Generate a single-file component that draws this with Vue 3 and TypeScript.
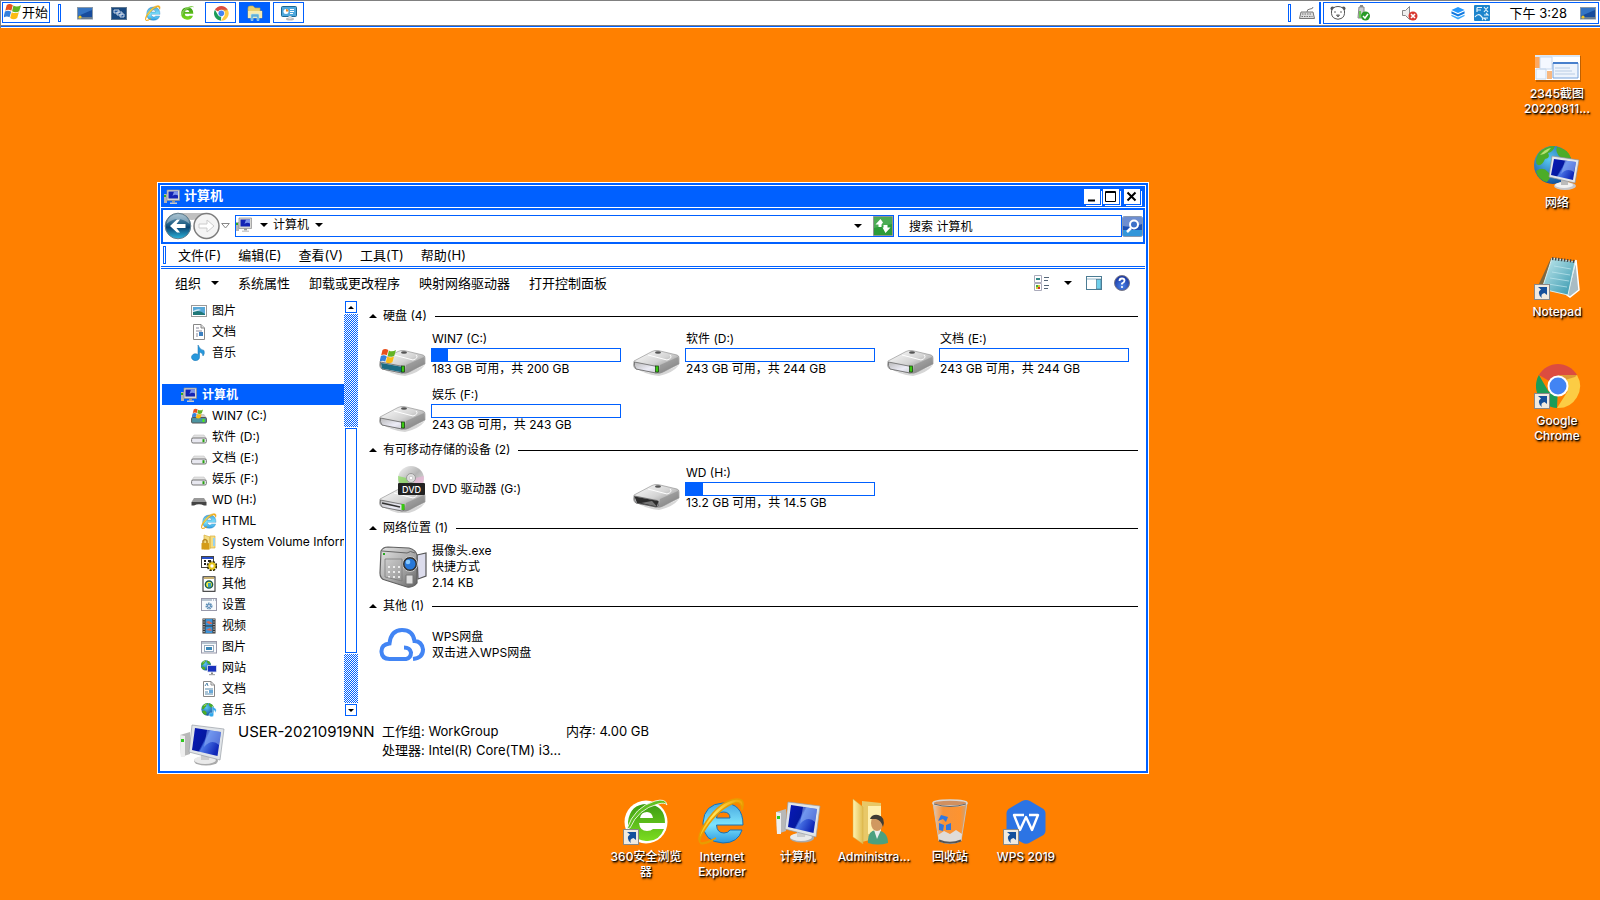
<script setup lang="ts">
import { ref } from 'vue'

interface TreeNode { icon: string; label: string; level: number; selected?: boolean }
interface Volume { icon: string; name: string; used?: number; lines: string[] }
interface Group { title: string; items: Volume[] }
interface Shortcut { icon: string; label: string; linked?: boolean }

const launchers = [
  { icon: 'showdesk', label: '显示桌面' },
  { icon: 'switcher', label: '切换窗口' },
  { icon: 'ie', label: 'Internet Explorer' },
  { icon: 'e360', label: '360安全浏览器' },
]
const tasks = [
  { icon: 'chrome', label: 'Google Chrome', active: false },
  { icon: 'explorer', label: '计算机', active: true },
  { icon: 'panel', label: '控制面板', active: false },
]
const menus = ['文件(F)', '编辑(E)', '查看(V)', '工具(T)', '帮助(H)']
const commands = ['系统属性', '卸载或更改程序', '映射网络驱动器', '打开控制面板']

const tree: TreeNode[] = [
  { icon: 'picture', label: '图片', level: 1 },
  { icon: 'doc', label: '文档', level: 1 },
  { icon: 'music', label: '音乐', level: 1 },
  { icon: '', label: '', level: 1 },
  { icon: 'pc', label: '计算机', level: 0, selected: true },
  { icon: 'sysdrive', label: 'WIN7 (C:)', level: 1 },
  { icon: 'smalldrive', label: '软件 (D:)', level: 1 },
  { icon: 'smalldrive', label: '文档 (E:)', level: 1 },
  { icon: 'smalldrive', label: '娱乐 (F:)', level: 1 },
  { icon: 'smallusb', label: 'WD (H:)', level: 1 },
  { icon: 'ie', label: 'HTML', level: 2 },
  { icon: 'locked', label: 'System Volume Information', level: 2 },
  { icon: 'program', label: '程序', level: 2 },
  { icon: 'other', label: '其他', level: 2 },
  { icon: 'settings', label: '设置', level: 2 },
  { icon: 'film', label: '视频', level: 2 },
  { icon: 'picwin', label: '图片', level: 2 },
  { icon: 'smallnet', label: '网站', level: 2 },
  { icon: 'docs', label: '文档', level: 2 },
  { icon: 'globemusic', label: '音乐', level: 2 },
]

const groups: Group[] = [
  {
    title: '硬盘 (4)',
    items: [
      { icon: 'drivewin', name: 'WIN7 (C:)', used: 8.5, lines: ['183 GB 可用，共 200 GB'] },
      { icon: 'drive', name: '软件 (D:)', used: 0, lines: ['243 GB 可用，共 244 GB'] },
      { icon: 'drive', name: '文档 (E:)', used: 0, lines: ['243 GB 可用，共 244 GB'] },
      { icon: 'drive', name: '娱乐 (F:)', used: 0, lines: ['243 GB 可用，共 243 GB'] },
    ],
  },
  {
    title: '有可移动存储的设备 (2)',
    items: [
      { icon: 'dvd', name: 'DVD 驱动器 (G:)', lines: [] },
      { icon: 'driveusb', name: 'WD (H:)', used: 9, lines: ['13.2 GB 可用，共 14.5 GB'] },
    ],
  },
  { title: '网络位置 (1)', items: [{ icon: 'camera', name: '摄像头.exe', lines: ['快捷方式', '2.14 KB'] }] },
  { title: '其他 (1)', items: [{ icon: 'cloud', name: 'WPS网盘', lines: ['双击进入WPS网盘'] }] },
]

const rightIcons: Shortcut[] = [
  { icon: 'shot', label: '2345截图 20220811...' },
  { icon: 'network', label: '网络' },
  { icon: 'notepad', label: 'Notepad', linked: true },
  { icon: 'chrome', label: 'Google Chrome', linked: true },
]
const bottomIcons: Shortcut[] = [
  { icon: 'e360', label: '360安全浏览器', linked: true },
  { icon: 'ie', label: 'Internet Explorer' },
  { icon: 'computer', label: '计算机' },
  { icon: 'userfolder', label: 'Administra...' },
  { icon: 'bin', label: '回收站' },
  { icon: 'wps', label: 'WPS 2019', linked: true },
]
const search = ref('搜索 计算机')
</script>

<template>
  <svg class="sheet" aria-hidden="true">
    <defs>
      <linearGradient id="g-screen" x1="0" y1="0" x2="1" y2="0.5"><stop offset="0" stop-color="#0818b8" /><stop offset=".5" stop-color="#0418a0" /><stop offset=".56" stop-color="#4c78e8" /><stop offset="1" stop-color="#1028b8" /></linearGradient>
      <linearGradient id="g-metal" x1="0" y1="0" x2="1" y2="1"><stop offset="0" stop-color="#fff" /><stop offset=".5" stop-color="#d4d4d4" /><stop offset="1" stop-color="#6c6c6c" /></linearGradient>
      <linearGradient id="g-face" x1="0" y1="0" x2="1" y2="1"><stop offset="0" stop-color="#b8b8b8" /><stop offset=".6" stop-color="#ececf6" /><stop offset="1" stop-color="#c8c8d0" /></linearGradient>
      <linearGradient id="g-ie" x1="0" y1="0" x2="0" y2="1"><stop offset="0" stop-color="#48a8e0" /><stop offset=".55" stop-color="#7ee4fc" /><stop offset="1" stop-color="#2c98e0" /></linearGradient>
      <linearGradient id="g-green" x1="0" y1="0" x2="0" y2="1"><stop offset="0" stop-color="#3c9c14" /><stop offset="1" stop-color="#7cdc20" /></linearGradient>
      <linearGradient id="g-gold" x1="0" y1="1" x2="1" y2="0"><stop offset="0" stop-color="#ffb400" /><stop offset=".5" stop-color="#ffe45c" /><stop offset="1" stop-color="#f0a000" /></linearGradient>
      <linearGradient id="g-pad" x1="0" y1="0" x2="1" y2="1"><stop offset="0" stop-color="#c8ecf0" /><stop offset="1" stop-color="#2f94ac" /></linearGradient>
      <linearGradient id="g-folder" x1="0" y1="0" x2="1" y2="0"><stop offset="0" stop-color="#fff4b0" /><stop offset="1" stop-color="#e0bc50" /></linearGradient>
      <linearGradient id="g-disc" x1="0" y1="0" x2="1" y2="1"><stop offset="0" stop-color="#f8f8f8" /><stop offset=".5" stop-color="#b4b4b4" /><stop offset="1" stop-color="#eee" /></linearGradient>
      <linearGradient id="g-glass" x1="0" y1="0" x2="1" y2="0"><stop offset="0" stop-color="#e0d4cc" stop-opacity=".9" /><stop offset=".3" stop-color="#f0a060" stop-opacity=".6" /><stop offset=".8" stop-color="#fca050" stop-opacity=".6" /><stop offset="1" stop-color="#b8a898" stop-opacity=".9" /></linearGradient>
      <linearGradient id="g-back" x1="0" y1="0" x2="0" y2="1"><stop offset="0" stop-color="#7fa4b8" /><stop offset=".45" stop-color="#1c5c84" /><stop offset=".55" stop-color="#0c4470" /><stop offset="1" stop-color="#2cb4dc" /></linearGradient>
      <linearGradient id="g-cam" x1="0" y1="0" x2="1" y2="1"><stop offset="0" stop-color="#e4e4e4" /><stop offset=".6" stop-color="#a4a4a4" /><stop offset="1" stop-color="#606060" /></linearGradient>
      <radialGradient id="g-globe" cx=".4" cy=".35" r=".7"><stop offset="0" stop-color="#58c8f4" /><stop offset="1" stop-color="#104c98" /></radialGradient>
      <radialGradient id="g-help" cx=".5" cy=".7" r=".7"><stop offset="0" stop-color="#4c84e8" /><stop offset="1" stop-color="#14309c" /></radialGradient>
    </defs>

    <symbol id="i-flag" viewBox="0 0 16 16">
      <path d="M2.500 2Q5 0 8.300 2L6.900 7.300Q4 5.500 1.200 7.300z" fill="#e8501c" />
      <path d="M8.900 2.400Q12 4.500 16 2L14.300 7.800Q11 9.600 7.600 7.700z" fill="#64b424" />
      <path d="M.9 8.100Q3.600 6.500 6.700 8.200L5.200 13.400Q2.600 11.800 -.5 13.600z" fill="#3480dc" />
      <path d="M7.300 8.600Q10.400 10.400 14 8.600L12.400 14.200Q9 16.400 5.800 14.200z" fill="#fcbc14" />
    </symbol>
    <symbol id="i-computer" viewBox="0 0 48 48">
      <path d="M2 15L12 12V34L3 37z" fill="#b8b8b8" /><path d="M2 15L7 16V37L3 37z" fill="#eee" /><rect x="3" y="19" width="3" height="3" fill="#30c820" />
      <ellipse cx="28" cy="41" rx="12" ry="4.500" fill="#aaa" /><ellipse cx="27" cy="40" rx="11" ry="4" fill="#eaeaea" /><path d="M23 33H32L31 40H23z" fill="#ccc" />
      <path d="M14 5L46 9L42 40L11 32z" fill="#e0e4e8" stroke="#9a9fa6" stroke-width=".7" /><path d="M17 8L43 12L39.500 36L14 30z" fill="url(#g-screen)" />
      <path d="M29 10L43 12L41 25Q34 18 26 27z" fill="#90b0f4" opacity=".55" />
    </symbol>
    <symbol id="i-pc" viewBox="0 0 16 16">
      <path d="M0 5H3V14H0z" fill="#b4b4b4" /><rect x="0" y="6" width="2" height="2" fill="#30b020" />
      <path d="M3 1H15.500V11.500H3z" fill="#d8d8d4" stroke="#8c8c8c" stroke-width=".7" /><path d="M4.500 2.500H14V9.500H4.500z" fill="#1424b4" /><path d="M10 2.500H14V6.500Q11 5 8.500 7z" fill="#7c94ec" />
      <path d="M8 11.500H11V13.500H8z" fill="#999" /><path d="M6 13.500H13V15H6z" fill="#ccc" />
    </symbol>
    <symbol id="i-globe" viewBox="0 0 48 48">
      <circle cx="20" cy="22" r="19" fill="url(#g-globe)" />
      <path d="M5 11Q11 3 22 3Q20 9 15 10Q18 15 12 16Q9 23 5 22Q1 20 5 11zM24 4Q35 6 38 15Q31 18 27 14Q22 9 24 4zM3 28Q10 23 15 29Q20 33 14 39Q5 37 3 28z" fill="#4cac28" />
      <path d="M7 12Q12 6 18 5Q15 9 11 11z" fill="#b4e070" />
    </symbol>
    <symbol id="i-network" viewBox="0 0 48 48">
      <use href="#i-globe" width="48" height="48" />
      <ellipse cx="32" cy="43" rx="11" ry="4" fill="#c8c8cc" /><ellipse cx="31" cy="42" rx="9" ry="3" fill="#f2f2f2" /><path d="M28 34H35V42H28z" fill="#bbb" />
      <path d="M19 13L46 17L42 40L16 34z" fill="#e4e7ea" stroke="#8c9298" stroke-width=".7" /><path d="M21 16L43 19L40 37L18 32z" fill="url(#g-screen)" /><path d="M32 17.500L43 19L41 29Q34 24 28 31z" fill="#90b0f4" opacity=".6" />
    </symbol>
    <symbol id="i-smallnet" viewBox="0 0 16 16">
      <use href="#i-globe" x="-.5" y="-.5" width="13" height="13" />
      <path d="M6.500 5.500H15.500V12H6.500z" fill="#1830bc" stroke="#e0e4f0" stroke-width=".8" /><path d="M10 12.500H12V14H10z" fill="#888" /><path d="M8 14H14V15.200H8z" fill="#aaa" />
    </symbol>
    <symbol id="i-globemusic" viewBox="0 0 48 48">
      <use href="#i-globe" width="48" height="48" /><path d="M34 12Q40 18 45 21Q47 28 42 32Q43 26 38 24V39A7 6 0 1 1 34 33z" fill="#30a8ec" stroke="#fff" />
    </symbol>
    <symbol id="i-base" viewBox="0 0 48 48">
      <path d="M2 36Q20 48 46 34Q40 42 26 45Q12 44 2 36z" fill="#bbb" opacity=".6" />
      <path d="M1 30L19 20.500Q22 19 25 19.500L44 24Q46 24.500 46 27V33L30 41Q27 43 23 42L3 38Q.5 37 .5 34z" fill="url(#g-metal)" stroke="#888" stroke-width=".6" />
      <path d="M27 34L45 26V33L30 41L26 42z" fill="#888" opacity=".6" />
      <path d="M15 24L34 29Q40 27 37 24" fill="none" stroke="#fff" /><ellipse cx="25" cy="21.500" rx="3" ry="1.200" fill="#555" />
      <path d="M1.500 31L24 35.500Q26 36 25.500 41L23 42L3 38Q.7 35 1.500 31z" fill="url(#g-face)" stroke="#666" stroke-width=".8" />
    </symbol>
    <symbol id="i-drive" viewBox="0 0 48 48"><use href="#i-base" width="48" height="48" /><rect x="22.500" y="35" width="3" height="6" fill="#38c810" stroke="#183810" stroke-width=".7" /></symbol>
    <symbol id="i-drivewin" viewBox="0 0 48 48">
      <use href="#i-base" width="48" height="48" /><path d="M2 32L24 36L24 41.500L3 37.500z" fill="#1c6c84" /><rect x="22.500" y="35" width="3" height="6" fill="#38c810" stroke="#183810" stroke-width=".7" />
      <use href="#i-flag" x="1" y="17" width="16" height="16" />
    </symbol>
    <symbol id="i-driveusb" viewBox="0 0 48 48"><use href="#i-base" width="48" height="48" /><path d="M1.500 31.500L25.500 36L24 42L4 38z" fill="#2c2c2c" /><path d="M8 38L19 36L24 41.500z" fill="#777" /></symbol>
    <symbol id="i-dvd" viewBox="0 0 48 48">
      <g transform="translate(0 4)"><use href="#i-base" width="48" height="48" /><path d="M3 34L21 38" stroke="#333" stroke-width="1.500" /><rect x="22.500" y="35" width="3" height="6" fill="#38c810" /></g>
      <circle cx="32" cy="14" r="13" fill="url(#g-disc)" /><path d="M32 14L19 11Q19 19 24 23z" fill="#7ce048" opacity=".6" /><path d="M32 14L45 11Q45 19 41 23z" fill="#f0b0d8" opacity=".6" /><circle cx="32" cy="13" r="4.500" fill="#ddd" stroke="#999" /><circle cx="32" cy="13" r="1.800" fill="#fff" stroke="#aaa" stroke-width=".5" />
      <rect x="19" y="18" width="27" height="12" rx="1" fill="#222" /><text x="32.500" y="27.500" font-size="9" fill="#fff" text-anchor="middle" font-family="Inter, sans-serif" font-weight="500">DVD</text>
    </symbol>
    <symbol id="i-smalldrive" viewBox="0 0 16 16"><path d="M3 6H13L15.500 9.500H.5z" fill="#e2e2e2" stroke="#bbb" stroke-width=".5" /><rect x=".6" y="9" width="14.800" height="5" rx="1.500" fill="#e8e8f0" stroke="#777" /><rect x="11.500" y="10.200" width="2" height="3" fill="#28a010" /></symbol>
    <symbol id="i-smallusb" viewBox="0 0 16 16"><path d="M3 6H13L15.500 10H.5z" fill="#999" /><path d="M.5 10H15.500V13.500H13Q8 11 3 13.500H.5z" fill="#444" /></symbol>
    <symbol id="i-sysdrive" viewBox="0 0 16 16"><path d="M3 6H13L15.500 9.500H.5z" fill="#ccc" /><rect x=".6" y="9.500" width="14.800" height="5.500" rx="1" fill="#4c94a0" stroke="#555" /><rect x="11.500" y="11" width="2" height="3" fill="#50f010" /><use href="#i-flag" x="1" y="0" width="11" height="11" /></symbol>

    <symbol id="i-ie" viewBox="0 0 48 48">
      <path d="M45 28H18.500Q19 36 26 36Q30 36 32 33H44Q40 46 25 46Q5 45 5 26Q6 7 25 6Q45 6 45 28zM18.500 21H32Q32 15 25.500 15Q19 15 18.500 21z" fill="url(#g-ie)" stroke="#1870b4" stroke-width="1" />
      <path d="M8 31Q-2 46 4 46Q9 46 18 41Q8 48 3 46.500Q-3 42 8 25Q22 4 38 2Q48 1 44 13Q44 5 38 5.500Q22 10 8 31z" fill="url(#g-gold)" stroke="#e89c00" stroke-width="1.500" />
    </symbol>
    <symbol id="i-e360" viewBox="0 0 48 48">
      <circle cx="24" cy="25" r="21.500" fill="#fff" />
      <path d="M43 26H17Q18 34 25 34Q29 34 31 32H42Q37 45 24 44Q6 42 6 25Q8 7 25 7Q43 8 43 26zM18 21H31Q30 15 25 15Q19 15 18 21z" fill="url(#g-green)" />
      <path d="M5 32Q12 10 33 4Q44 1 45 8Q43 5 36 7Q16 12 8 31z" fill="#60c020" stroke="#fff" stroke-width=".8" />
    </symbol>
    <symbol id="i-chrome" viewBox="0 0 48 48">
      <path d="M25 25L5.900 14A22 22 0 0 1 44 14z" fill="#dc4c40" /><path d="M25 25L24 47A22 22 0 0 1 5.900 14L15.500 30.500z" fill="#1c9c58" /><path d="M25 25V14H44A22 22 0 0 1 24 47L34.500 30.500z" fill="#fccc44" />
      <path d="M44 14H25V21L42 16z" fill="#a83c20" opacity=".35" /><circle cx="25" cy="25" r="10.500" fill="#fff" /><circle cx="25" cy="25" r="8.500" fill="#4284f4" />
    </symbol>
    <symbol id="i-userfolder" viewBox="0 0 48 48">
      <path d="M12 4L31 6V40L12 45z" fill="#e8c868" /><path d="M18 9H31V37H18z" fill="#fff0b0" /><path d="M3 2L13 10V47L3 40z" fill="url(#g-folder)" stroke="#d4ac40" stroke-width=".5" />
      <path d="M18 46Q17 34 26 33Q38 34 38 46Q28 49 18 46z" fill="#4ca080" /><path d="M24 33L27 42L31 33z" fill="#eee" /><ellipse cx="27" cy="26" rx="6" ry="8" fill="#d09860" /><path d="M20 22Q22 17 28 18Q36 20 33 30Q31 23 26 22z" fill="#403c34" />
    </symbol>
    <symbol id="i-bin" viewBox="0 0 48 48">
      <path d="M7 6H41L35 44Q24 49 13 44z" fill="url(#g-glass)" stroke="#c8c0b8" /><path d="M12 38L18 34L24 37L30 33L36 37L35 44Q24 49 13 44z" fill="#e0dcd8" /><path d="M13 43.500Q24 48 35 43.500" stroke="#555" stroke-width="2" fill="none" />
      <ellipse cx="24" cy="6" rx="17" ry="3" fill="#d09060" stroke="#d8d8d8" stroke-width="1.500" /><path d="M8 7Q24 12 40 7" stroke="#666" fill="none" />
      <path d="M12 24L15 18L22 20L20 25L17 22zM13 26L18 28L17 34L13 33zM20 33L20 28L25 26L25 33z" fill="#3078e0" />
    </symbol>
    <symbol id="i-wps" viewBox="0 0 48 48"><path d="M24 3Q26 3 28 4L41.500 12Q43.500 14 43.500 16V34Q43.500 36 41.500 38L28 45.500Q24 48 20 45.500L6.500 38Q4.500 36 4.500 34V16Q4.500 14 6.500 12L20 4Q22 3 24 3z" fill="#2c74e4" /><path d="M22 18H12L18 33L24 20L30 33L36 18H27" fill="none" stroke="#fff" stroke-width="2.400" stroke-linejoin="round" /></symbol>
    <symbol id="i-shot" viewBox="0 0 48 48">
      <rect x="3" y="22" width="45" height="26" fill="#000" opacity=".25" /><rect x="2" y="21" width="45" height="25" fill="#fff" /><path d="M2 21H47V23H2z" fill="#dce8f4" /><path d="M2 23H7V34H2z" fill="#fca860" /><path d="M7 23H19V35H7zM3 35H13V45H3z" fill="#f4f8ff" stroke="#c8d8ec" /><path d="M20 29H45V44H20z" fill="#eef4fc" stroke="#78a4dc" /><path d="M20 29H45" stroke="#4880cc" stroke-width="2" /><path d="M22 34H37M22 37H39M22 40H42" stroke="#b8cce4" /><path d="M14 37H19V45H14z" fill="#f8b880" />
    </symbol>
    <symbol id="i-notepad" viewBox="0 0 48 48">
      <path d="M18 6L3 38L15 44L25 12z" fill="#806840" /><path d="M43 8L46 38L37 45L34 43z" fill="#a8bcc4" stroke="#fff" stroke-width="1.500" /><path d="M19 6L42 10L35 43L9 37z" fill="url(#g-pad)" stroke="#d8eef0" />
      <path d="M21 14L38 17M19 20L37 23M17 26L36 29M15 32L34 35" stroke="#c0e8f0" stroke-width="1" opacity=".7" /><path d="M19 6.500L42 9.500" stroke="#444" stroke-width="3" stroke-dasharray="1.500 1.500" />
    </symbol>
    <symbol id="i-link" viewBox="0 0 16 16"><rect x=".5" y=".5" width="15" height="15" fill="#f0eae0" stroke="#888" /><path d="M4 3H13V11L10.500 9Q6 10 8 14Q2 9 7 5.500z" fill="#14509c" /></symbol>
    <symbol id="i-camera" viewBox="0 0 48 48">
      <path d="M38 12L47 10V33L39 36z" fill="#dcdcec" stroke="#555" stroke-width="1.200" /><path d="M2 8Q4 4 9 4L30 5Q37 7 38 12V40Q34 45 28 44L6 37Q1 36 1 30z" fill="url(#g-cam)" stroke="#606060" stroke-width="1.200" />
      <path d="M3 8L28 10Q31 7 36 10" fill="none" stroke="#666" /><circle cx="31" cy="21" r="7.500" fill="#333" stroke="#ccc" stroke-width="1" /><circle cx="31" cy="21" r="5.500" fill="#2878d8" /><circle cx="29" cy="19" r="2.300" fill="#88c8fc" /><path d="M27 32H34V41H27z" fill="#ddd" stroke="#777" /><rect x="4" y="10" width="2" height="2" fill="#28a820" />
      <path d="M9 24H21M9 29H21M9 34H21" stroke="#fff" stroke-width="1.500" stroke-dasharray="2 3" /><path d="M6 16H23V38L6 34z" fill="none" stroke="#777" stroke-width=".7" />
    </symbol>
    <symbol id="i-cloud" viewBox="0 0 48 48"><path d="M34 38Q44 37 44 28.500Q43 20.500 35.500 20Q34 9 23 9Q12 9 10.500 22.500Q2 23.500 2.500 31Q3 38 10.500 38H27Q32 37 32 31.500Q31 26.500 25 26.500" fill="none" stroke="#4285f4" stroke-width="4" /></symbol>

    <symbol id="i-picture" viewBox="0 0 16 16"><rect x=".5" y="2.500" width="15" height="11" fill="#fff" stroke="#999" /><rect x="2" y="4" width="12" height="8" fill="#58a8d8" /><path d="M2 9Q8 6 14 11V12H2z" fill="#207878" /><path d="M2 8Q7 5 10 7L2 9z" fill="#d8ecf4" /></symbol>
    <symbol id="i-doc" viewBox="0 0 16 16"><path d="M2.500 .5H10L13.500 4V15.500H2.500z" fill="#fff" stroke="#888" /><path d="M10 .5V4H13.500" fill="#ddd" stroke="#888" /><path d="M5 4H8M5 7H11M5 10H7M5 12H7" stroke="#889" /><rect x="8" y="8" width="4" height="4" fill="#3c80c0" /></symbol>
    <symbol id="i-docs" viewBox="0 0 16 16"><path d="M2.500 .5H10L13.500 4V15.500H2.500z" fill="#fff" stroke="#888" /><path d="M10 .5V4H13.500" fill="none" stroke="#888" /><path d="M4 5L6 2L7 5M4 8H12M4 11H7M4 13H12" stroke="#58a" fill="none" /><rect x="8" y="9" width="4" height="3" fill="#68a8d8" /></symbol>
    <symbol id="i-music" viewBox="0 0 16 16"><path d="M7 0Q9 5 13 5.500Q14 9 12 11Q12 8 8.500 7V12A4 3.500 0 1 1 7 9.500z" fill="#2898dc" stroke="#1470b0" stroke-width=".5" /></symbol>
    <symbol id="i-locked" viewBox="0 0 16 16"><path d="M3 1L9 3V15H3zM9 2H14V14H9z" fill="#f4dc80" stroke="#d8b040" stroke-width=".7" /><rect x="12" y="4" width="2" height="8" fill="#98d0ec" /><rect x=".5" y="9" width="7.500" height="6.500" rx=".5" fill="#d49c18" /><path d="M2 9V7Q4 4 6 7V9" fill="none" stroke="#b88820" stroke-width="1.500" /></symbol>
    <symbol id="i-program" viewBox="0 0 16 16"><rect x=".5" y="1.500" width="12" height="11" fill="#fff" stroke="#444" /><rect x="1" y="2" width="11" height="2" fill="#2850c8" /><path d="M3 6H5M7 6H10M3 9H5" stroke="#222" stroke-width="2" /><circle cx="11" cy="11" r="3.800" fill="none" stroke="#332c00" stroke-width="3" stroke-dasharray="2 1" /><circle cx="11" cy="11" r="2.700" fill="#fff" stroke="#e8c818" stroke-width="2" /></symbol>
    <symbol id="i-other" viewBox="0 0 16 16"><rect x="2" y=".8" width="12" height="14.500" fill="#fff" stroke="#222" /><path d="M3 2H13" stroke="#c8b070" stroke-width="2" /><circle cx="8" cy="8.500" r="3.600" fill="#f8f040" stroke="#145850" stroke-width="1.500" /><path d="M7 7H10V11H7z" fill="#38a0c0" /></symbol>
    <symbol id="i-settings" viewBox="0 0 16 16"><rect x=".5" y="1.500" width="15" height="12" fill="#f8fafc" stroke="#99a" /><path d="M1 3H15" stroke="#b8c4d0" stroke-width="2" stroke-dasharray="10 1 1 1" /><circle cx="8" cy="9" r="2.300" fill="none" stroke="#6090b8" stroke-width="2.400" stroke-dasharray="1.200 .6" /><circle cx="8" cy="9" r="1.500" fill="#eef" stroke="#6090b8" /></symbol>
    <symbol id="i-film" viewBox="0 0 16 16"><rect x="1.500" y=".5" width="13" height="15" fill="#333" /><rect x="4.500" y="1" width="7" height="6.500" fill="#3c94d8" /><rect x="4.500" y="8.500" width="7" height="6.500" fill="#3c94d8" /><path d="M5 4L8 3L11 5V6H8zM5 12L9 10L11 13z" fill="#d86850" /><path d="M3 1V15M13 1V15" stroke="#ddd" stroke-width="1.200" stroke-dasharray="1.200 1.200" /></symbol>
    <symbol id="i-picwin" viewBox="0 0 16 16"><rect x=".5" y="2.500" width="15" height="11.500" fill="#f8fafc" stroke="#99a" /><path d="M1 4H15" stroke="#b8c4d0" stroke-width="2" /><rect x="3.500" y="6.500" width="9" height="6" fill="#fff" stroke="#9ab" /><rect x="5" y="8" width="6" height="3" fill="#3c88b8" /></symbol>

    <symbol id="i-showdesk" viewBox="0 0 16 16"><rect x=".5" y="2.500" width="15" height="11.500" fill="#184c9c" stroke="#8898a8" /><path d="M1 3H15V5L1 11z" fill="#3474c4" /><path d="M1 12H15V14H1z" fill="#687c90" /><circle cx="3" cy="12" r="1.600" fill="#f0c828" /></symbol>
    <symbol id="i-switcher" viewBox="0 0 16 16"><rect x=".5" y="2.500" width="15" height="12" fill="#184880" stroke="#607890" /><path d="M3 5H8V8H3zM6 7H11V10H6zM9 9H13V12H9z" fill="#2058a0" stroke="#f0f4f8" stroke-width=".8" /></symbol>
    <symbol id="i-explorer" viewBox="0 0 16 16"><path d="M1 3Q1 1 3 1H6L8 3H13V6H15V13H1z" fill="#e8d070" stroke="#c8a840" stroke-width=".6" /><path d="M1 6H15V13H1z" fill="#f8ecb0" /><path d="M4 15.500V10Q4 9 5 9H11Q12 9 12 10V15.500H10V12H6V15.500z" fill="#60b0d8" stroke="#b8e4f4" stroke-width=".6" /></symbol>
    <symbol id="i-panel" viewBox="0 0 16 16"><rect x=".5" y="1.500" width="15" height="10" rx="1" fill="#50a8dc" stroke="#1c6894" /><circle cx="5" cy="6.500" r="2.500" fill="#fff" /><path d="M5 6.500V4A2.500 2.500 0 0 1 7.500 6.500z" fill="#f08820" /><path d="M9 4.500H13M9 6.500H13M9 8.500H12" stroke="#fff" /><ellipse cx="9" cy="14" rx="4" ry="1.500" fill="#bbb" /><path d="M7.500 11H10.500V14H7.500z" fill="#ddd" /></symbol>
    <symbol id="i-keyboard" viewBox="0 0 16 16"><path d="M2 7H14L15.500 13.500H.5z" fill="#ddd" stroke="#777" /><path d="M3 9H13M2.500 11.500H13.500" stroke="#777" stroke-width="1.200" stroke-dasharray="1.500 1" /><path d="M8 7Q8 4 11 4Q14 4 14 2" fill="none" stroke="#777" /></symbol>
    <symbol id="i-bear" viewBox="0 0 16 16"><circle cx="2.500" cy="3.500" r="2" fill="#555" /><circle cx="13.500" cy="3.500" r="2" fill="#555" /><path d="M1.500 6Q3 1.500 8 1.500Q13 1.500 14.500 6Q15 12 11 13.500Q8 15 5 13.500Q1 12 1.500 6z" fill="#fff" stroke="#555" /><path d="M5 6V8M11 6V8M6.500 10H9.500L8 12z" stroke="#666" fill="#999" /></symbol>
    <symbol id="i-usb" viewBox="0 0 16 16"><path d="M4 2H9V13H3z" fill="#ccc" stroke="#888" /><path d="M5 0H8V2H5z" fill="#888" /><path d="M4 6H6V13H4z" fill="#68c850" /><circle cx="10.500" cy="11" r="4.500" fill="#289828" /><path d="M8 11L10 13L13 9" stroke="#fff" stroke-width="1.500" fill="none" /></symbol>
    <symbol id="i-mute" viewBox="0 0 16 16"><path d="M.5 5.500H3.500L7.500 1.500V14.500L3.500 10.500H.5z" fill="#eee" stroke="#888" /><circle cx="11" cy="11" r="4.500" fill="#d83830" /><path d="M9 9L13 13M13 9L9 13" stroke="#fff" stroke-width="1.600" /></symbol>
    <symbol id="i-layers" viewBox="0 0 16 16"><path d="M8 1L15.500 4.500L8 8L.5 4.500z" fill="#2498fc" /><path d="M.5 6L8 9.500L15.500 6V8.500L8 12L.5 8.500z" fill="#1078e0" /><path d="M.5 10L8 13L15.500 10V11.500L8 15.500L.5 11.500z" fill="#38a8fc" /></symbol>
    <symbol id="i-gfx" viewBox="0 0 16 16"><rect width="16" height="16" rx="1" fill="#1c84cc" /><path d="M3 2.500H8M3 2.500V7M3 5H7M10 2L14 7M14 2L10 7M1 12Q4 8 7 11Q10 14 8 15M10 10H14L12 8M14 13H10L12 15" fill="none" stroke="#e4f4fc" stroke-width="1.200" /></symbol>
    <symbol id="i-view" viewBox="0 0 16 16"><path d="M.5 .5H7.500V7.500H.5zM.5 8.500H7.500V15.500H.5z" fill="#fff" stroke="#aab" /><path d="M2 3H6V5H2z" fill="#388" /><path d="M2 10H4V12H2z" fill="#4a4" /><path d="M4 12H6V14H4z" fill="#c33" /><path d="M4 10H6V12H4zM2 12H4V14H2z" fill="#cc3" /><path d="M10 2.500H15M10 5.500H14M10 10.500H15M10 13.500H14" stroke="#567" /></symbol>
    <symbol id="i-pane" viewBox="0 0 16 16"><rect x=".5" y="1.500" width="15" height="13" fill="#fff" stroke="#4c7c94" /><path d="M1 4H15" stroke="#90b4c8" stroke-width="1" /><rect x="10.500" y="4.500" width="4.500" height="9.500" fill="#70d0ec" stroke="#4c7c94" stroke-width=".7" /></symbol>
    <symbol id="i-help" viewBox="0 0 16 16"><circle cx="8" cy="8" r="7.500" fill="url(#g-help)" stroke="#778" /><path d="M5.500 6Q5.500 3.500 8 3.500Q10.500 3.500 10.500 5.800Q10.500 7.200 8 8.500V9.500" fill="none" stroke="#fff" stroke-width="1.800" /><circle cx="8" cy="12" r="1.100" fill="#fff" /></symbol>
    <symbol id="i-refresh" viewBox="0 0 20 20"><path d="M.5 .5H19.500V19.500H.5z" fill="#2c9c38" stroke="#909890" /><path d="M1 1H19V8L1 12z" fill="#60b868" opacity=".6" /><path d="M7.500 3L2.500 8.500H5.500V11H8.500V8.500L10 6.500zM12.500 17L17.500 11.500H14.500V9H10.500V11.500H9.500z" fill="#fff" /></symbol>
    <symbol id="i-find" viewBox="0 0 21 21"><rect x=".5" y=".5" width="20" height="20" rx="2" fill="#1c50b4" stroke="#8898b0" /><path d="M1 1H20V8Q10 12 1 10z" fill="#90a8dc" opacity=".7" /><path d="M1 14H20V20H1z" fill="#38a8e4" opacity=".8" /><circle cx="12" cy="8.500" r="4" fill="#3c70c8" stroke="#fff" stroke-width="2" /><path d="M9 12L5 16" stroke="#fff" stroke-width="2.500" /></symbol>
    <symbol id="i-nav" viewBox="0 0 56 28">
      <path d="M14 1H42Q36 8 28 8T14 1z" fill="#c0c0c0" /><circle cx="14" cy="14" r="12.800" fill="url(#g-back)" stroke="#67808e" /><path d="M2.500 12Q14 2 25.500 12Q24 2 14 2Q4 3 2.500 12z" fill="#fff" opacity=".35" /><path d="M6 14L13 7.500H16L12.500 12H21.500V16H12.500L16 20.500H13z" fill="#fff" />
      <circle cx="42.500" cy="14" r="12.500" fill="#f4f4f4" stroke="#7c7c7c" stroke-width="1.500" /><path d="M50 14L43 8V12H35V16H43V20z" fill="#fff" stroke="#ccc" />
    </symbol>
  </svg>

  <div class="desktop">
    <header class="taskbar">
      <button class="start"><svg class="s18"><use href="#i-flag" /></svg>开始</button>
      <span class="grip"></span>
      <nav class="launch">
        <button v-for="l in launchers" :key="l.icon" :aria-label="l.label"><svg class="s16"><use :href="'#i-' + l.icon" /></svg></button>
      </nav>
      <nav class="tasks">
        <button v-for="t in tasks" :key="t.icon" :class="{ active: t.active }" :aria-label="t.label"><svg class="s16"><use :href="'#i-' + t.icon" /></svg></button>
      </nav>
      <div class="notify">
        <span class="grip"></span>
        <button aria-label="输入法"><svg class="s16"><use href="#i-keyboard" /></svg></button>
        <span class="rule"></span>
        <div class="tray">
          <button aria-label="助手"><svg class="s16"><use href="#i-bear" /></svg></button>
          <button class="usb" aria-label="安全删除硬件"><svg class="s16"><use href="#i-usb" /></svg></button>
          <button class="mute" aria-label="音量"><svg class="s16"><use href="#i-mute" /></svg></button>
          <button class="layers" aria-label="缓冲"><svg class="s14"><use href="#i-layers" /></svg></button>
          <button class="gfx" aria-label="显卡"><svg class="s16"><use href="#i-gfx" /></svg></button>
          <time>下午 3:28</time>
          <button class="desk" aria-label="显示桌面"><svg class="s16"><use href="#i-showdesk" /></svg></button>
        </div>
      </div>
    </header>

    <section class="window">
      <div class="frame">
        <div class="title">
          <svg class="s16"><use href="#i-pc" /></svg>
          <h1>计算机</h1>
          <div class="controls">
            <button aria-label="最小化"><svg viewBox="0 0 15 15"><path d="M4 11.500H11" stroke="#000" stroke-width="2" /></svg></button>
            <button aria-label="最大化"><svg viewBox="0 0 15 15"><path d="M2.500 2.500H12.500V12.500H2.500zM2 3.500H13" stroke="#000" fill="none" /></svg></button>
            <button class="close" aria-label="关闭"><svg viewBox="0 0 15 15"><path d="M3.500 3.500L11.500 11.500M11.500 3.500L3.500 11.500" stroke="#000" stroke-width="2" /></svg></button>
          </div>
        </div>

        <div class="address">
          <button class="nav" aria-label="后退和前进"><svg><use href="#i-nav" /></svg></button>
          <button class="history" aria-label="历史"><svg viewBox="0 0 9 6"><path d="M.7 .5H8.300L4.500 5z" fill="#fff" stroke="#888" /></svg></button>
          <div class="path">
            <svg class="s16"><use href="#i-pc" /></svg>
            <button class="crumb lead" aria-label="展开"><i class="down"></i></button>
            <button class="crumb">计算机<i class="down"></i></button>
            <button class="crumb more" aria-label="以前的位置"><i class="down"></i></button>
            <button class="reload" aria-label="刷新"><svg><use href="#i-refresh" /></svg></button>
          </div>
          <input v-model="search" class="search" aria-label="搜索" />
          <button class="find" aria-label="开始搜索"><svg><use href="#i-find" /></svg></button>
        </div>

        <nav class="menubar">
          <span class="grip"></span>
          <button v-for="m in menus" :key="m">{{ m }}</button>
        </nav>
        <div class="double"></div>

        <div class="commands">
          <button class="organize">组织<i class="down"></i></button>
          <button v-for="c in commands" :key="c">{{ c }}</button>
          <div class="viewtools">
            <button aria-label="更改视图"><svg class="s16"><use href="#i-view" /></svg></button>
            <button class="pick" aria-label="更多选项"><i class="down"></i></button>
            <button class="pane" aria-label="预览窗格"><svg class="s16"><use href="#i-pane" /></svg></button>
            <button aria-label="帮助"><svg class="s16"><use href="#i-help" /></svg></button>
          </div>
        </div>

        <div class="body">
          <ul class="tree">
            <li v-for="(n, i) in tree" :key="i" :class="['l' + n.level, { selected: n.selected }]">
              <svg v-if="n.icon" class="s16"><use :href="'#i-' + n.icon" /></svg>
              <span>{{ n.label }}</span>
            </li>
          </ul>
          <div class="scroll">
            <button aria-label="向上滚动"><i class="up"></i></button>
            <div class="trough upper"></div>
            <div class="thumb"></div>
            <div class="trough lower"></div>
            <button aria-label="向下滚动"><i class="down small"></i></button>
          </div>
          <main class="content">
            <section v-for="g in groups" :key="g.title" class="group">
              <h2><i class="up"></i>{{ g.title }}<span class="line"></span></h2>
              <ul>
                <li v-for="v in g.items" :key="v.name" :class="{ volume: v.used !== undefined }">
                  <svg class="s48"><use :href="'#i-' + v.icon" /></svg>
                  <div class="info">
                    <p>{{ v.name }}</p>
                    <div v-if="v.used !== undefined" class="bar"><div :style="{ width: v.used + '%' }"></div></div>
                    <p v-for="t in v.lines" :key="t">{{ t }}</p>
                  </div>
                </li>
              </ul>
            </section>
          </main>
        </div>

        <footer class="details">
          <svg class="s48"><use href="#i-computer" /></svg>
          <p class="host">USER-20210919NN</p>
          <div class="facts"><p>工作组: WorkGroup</p><p>处理器: Intel(R) Core(TM) i3...</p></div>
          <p>内存: 4.00 GB</p>
        </footer>
      </div>
    </section>

    <ul class="icons column">
      <li v-for="s in rightIcons" :key="s.label">
        <span class="art"><svg class="s48"><use :href="'#i-' + s.icon" /></svg><svg v-if="s.linked" class="badge"><use href="#i-link" /></svg></span>
        <span class="label">{{ s.label }}</span>
      </li>
    </ul>
    <ul class="icons row">
      <li v-for="s in bottomIcons" :key="s.label">
        <span class="art"><svg class="s48"><use :href="'#i-' + s.icon" /></svg><svg v-if="s.linked" class="badge"><use href="#i-link" /></svg></span>
        <span class="label">{{ s.label }}</span>
      </li>
    </ul>
  </div>
</template>

<style>
html, body, #app { height: 100%; }
body { margin: 0; background: #ff8000; overflow: hidden; }
</style>

<style scoped>
.desktop {
  --blue: #0060ff;
  position: relative;
  height: 100%;
  font: 12px/16px Inter, "Noto Sans CJK SC", sans-serif;
  color: #000;
}
.sheet { position: absolute; width: 0; height: 0; }
button { font: inherit; color: inherit; background: none; border: 0; padding: 0; margin: 0; display: flex; align-items: center; white-space: nowrap; }
ul { list-style: none; margin: 0; padding: 0; }
p, h1, h2 { margin: 0; font: inherit; }
svg { display: block; flex: none; }
.s14 { width: 14px; height: 14px; }
.s16 { width: 16px; height: 16px; }
.s18 { width: 17px; height: 17px; }
.s48 { width: 48px; height: 48px; }
.down, .up { border: 4px solid transparent; border-bottom-width: 0; border-top-color: #000; }
.up { border-width: 0 4px 4px; border-bottom-color: #000; }
.small { border-width: 3px 3px 0; }
.grip { box-sizing: border-box; width: 3px; height: 18px; border: 1px solid var(--blue); background: #fff; flex: none; }

.taskbar { box-sizing: border-box; height: 28px; display: flex; align-items: flex-start; padding: 1px 1px 0; border: 1px solid #808080; border-width: 1px 0 0 1px; background: #fff; box-shadow: inset 0 -1px #fff, inset 0 -2px var(--blue), inset 0 -3px #808080; }
.start { box-sizing: border-box; height: 21px; width: 48px; border: 1px solid var(--blue); font-size: 13px; line-height: 16px; padding: 0 0 2px 1px; gap: 1px; }
.taskbar > .grip { margin: 2px 0 0 8px; }
.launch { display: flex; gap: 18px; margin: 3px 0 0 16px; }
.tasks { display: flex; gap: 3px; margin-left: 10px; }
.tasks button { box-sizing: border-box; width: 31px; height: 21px; border: 1px solid var(--blue); justify-content: center; }
.tasks .active { background: var(--blue); }
.notify { margin-left: auto; display: flex; align-items: center; height: 22px; }
.notify > button { margin: 0 4px 0 8px; }
.rule { width: 2px; height: 22px; background: var(--blue); margin-right: 2px; }
.tray { box-sizing: border-box; height: 22px; width: 276px; border: 1px solid var(--blue); display: flex; align-items: center; padding: 0 2px 0 6px; }
.usb { margin-left: 9px; }
.mute { margin-left: 31px; }
.layers { margin-left: 33px; }
.gfx { margin-left: 9px; }
.tray time { font-size: 13px; margin-left: auto; padding-bottom: 1px; }
.desk { margin-left: 13px; }

.window { position: absolute; left: 157px; top: 182px; width: 62%; box-sizing: border-box; border: 1px solid #fff; background: #fff; }
.frame { border: 2px solid var(--blue); padding: 1px; }
.title { height: 21px; background: var(--blue); color: #fff; display: flex; align-items: center; padding: 0 5px 0 3px; }
.title h1 { font-size: 13px; font-weight: 700; margin-left: 4px; padding-bottom: 3px; }
.controls { margin-left: auto; display: flex; gap: 3px; }
.controls button { width: 16px; height: 15px; background: #fff; box-shadow: 1px 1px var(--blue), 2px 2px #fff; }
.controls svg { width: 15px; height: 15px; }
.controls .close { margin-left: 2px; }

.address { margin-top: 1px; height: 32px; border: 2px solid var(--blue); display: flex; align-items: center; }
.nav { margin-left: 1px; }
.nav svg { width: 56px; height: 28px; }
.history { margin-left: 1px; }
.history svg { width: 9px; height: 6px; }
.path { box-sizing: border-box; flex: 1; height: 22px; border: 1px solid var(--blue); display: flex; align-items: center; margin-left: 5px; }
.path > .s16 { margin-bottom: 3px; }
.crumb { gap: 6px; padding-bottom: 3px; }
.crumb.lead { margin: 0 5px 0 8px; }
.crumb.more { margin-left: auto; margin-right: 11px; padding-bottom: 0; }
.reload svg { width: 20px; height: 20px; }
.search { box-sizing: border-box; width: 224px; height: 22px; border: 1px solid var(--blue); margin: 0 0 0 4px; padding: 0 10px 2px; font: inherit; color: #000; outline: 0; }
.find svg { width: 21px; height: 21px; }

.menubar { display: flex; align-items: center; height: 22px; padding-left: 2px; font-size: 13px; gap: 17px; }
.menubar .grip { margin-right: -5px; }
.menubar button { padding-bottom: 1px; }
.double { border: 1px solid var(--blue); border-width: 1px 0; height: 1px; }
.commands { box-sizing: border-box; display: flex; align-items: center; height: 31px; padding: 0 0 3px 14px; gap: 19px; font-size: 13px; }
.organize { gap: 10px; }
.viewtools { margin-left: auto; display: flex; align-items: center; padding-right: 15px; }
.pick { margin: 0 14px; }
.pane { margin-right: 12px; }

.body { display: flex; height: 417px; overflow: hidden; }
.tree { width: 182px; overflow: hidden; margin-left: 1px; }
.tree li { display: flex; align-items: center; height: 21px; gap: 5px; white-space: nowrap; }
.tree .l0 { padding-left: 19px; }
.tree .l1 { padding-left: 29px; }
.tree .l2 { padding-left: 39px; }
.selected { background: var(--blue); color: #fff; font-weight: 700; }
.scroll { width: 14px; padding: 1px 0; display: flex; flex-direction: column; align-items: center; }
.scroll button { box-sizing: border-box; width: 12px; height: 12px; border: 1px solid var(--blue); justify-content: center; flex: none; }
.scroll .up { border-width: 0 3px 3px; }
.trough { width: 14px; background: repeating-conic-gradient(var(--blue) 0 25%, #fff 0 50%) 0 0 / 2px 2px; }
.upper { flex: 114; margin-top: 1px; }
.thumb { box-sizing: border-box; width: 12px; flex: 225; border: 1px solid var(--blue); margin: 1px 0; }
.lower { flex: 50; margin-bottom: 1px; }
.content { flex: 1; min-width: 0; padding: 5px 7px 0 11px; }
.group h2 { display: flex; align-items: center; height: 22px; white-space: nowrap; }
.group h2 .up { margin-right: 6px; }
.line { flex: 1; height: 1px; background: #000; margin-left: 8px; }
.group ul { display: grid; grid-template-columns: repeat(3, 254px); padding-left: 10px; }
.group li { height: 56px; display: flex; align-items: center; }
.info { width: 190px; margin-left: 4px; white-space: nowrap; }
.info p { padding-left: 1px; }
.volume .info { height: 48px; }
.bar { box-sizing: border-box; height: 14px; border: 1px solid var(--blue); margin: 1px 0 -1px; }
.bar div { height: 100%; background: var(--blue); }

.details { box-sizing: border-box; height: 53px; display: flex; font-size: 13px; line-height: 19px; white-space: nowrap; padding: 3px 0 0 17px; }
.details p { margin-top: 2px; }
.details p + p { margin-top: 0; }
.host { width: 144px; margin-left: 12px; font-size: 15px; }
.facts { width: 184px; }

.icons { position: absolute; display: flex; }
.icons li { width: 76px; height: 109px; display: flex; flex-direction: column; align-items: center; }
.column { flex-direction: column; right: 5px; top: 34px; }
.row { left: 608px; top: 797px; }
.art { position: relative; }
.badge { position: absolute; left: 1px; bottom: 0; width: 16px; height: 16px; }
.label { color: #fff; font-weight: 500; line-height: 15px; margin-top: 4px; text-align: center; overflow-wrap: anywhere; text-shadow: 1px 1px 1px #000, 1px 2px 2px rgba(0, 0, 0, .7); }
</style>
